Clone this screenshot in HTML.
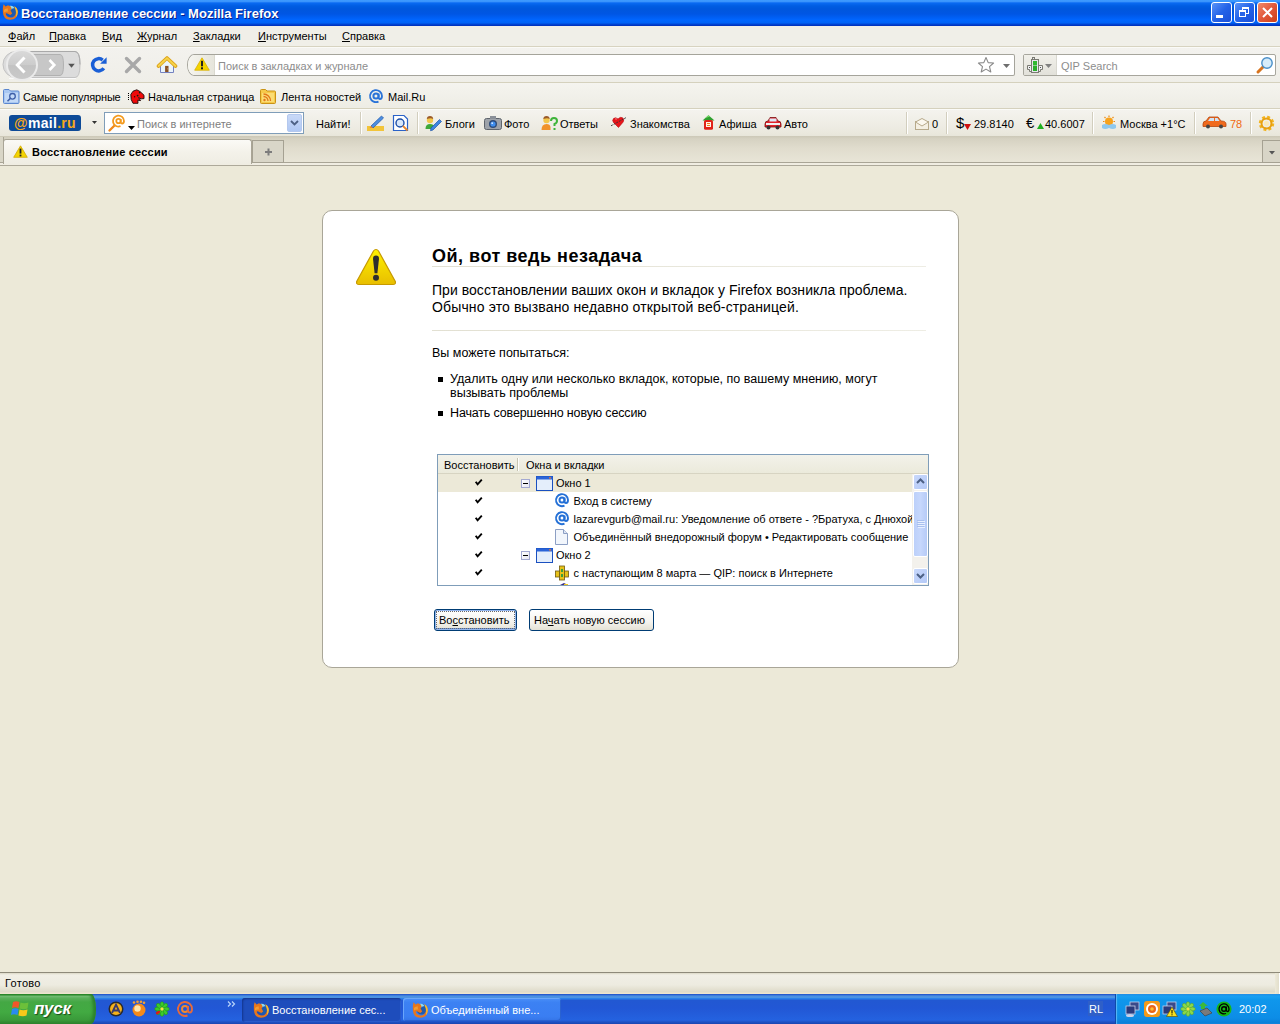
<!DOCTYPE html>
<html><head><meta charset="utf-8">
<style>
*{margin:0;padding:0;box-sizing:border-box}
html,body{width:1280px;height:1024px;overflow:hidden;background:#ECE9D8;font-family:"Liberation Sans",sans-serif;font-size:11px;color:#000}
.a{position:absolute}
.t{position:absolute;white-space:nowrap;line-height:13px}
svg{position:absolute;overflow:visible}
</style></head><body>

<!-- TITLE BAR -->
<div class="a" style="left:0;top:0;width:1280px;height:26px;background:linear-gradient(#3E9BFF 0px,#3A94FC 1.5px,#0A6AF2 3px,#005DE2 6px,#0057DD 9px,#0056E4 14px,#0060F6 18px,#0066FF 20px,#0063F5 23px,#0048D8 24px,#0034C0 25.5px,#0034C0 26px)"></div>
<svg style="left:2px;top:4px" width="16" height="16" viewBox="0 0 16 16"><circle cx="9.6" cy="7.2" r="5.2" fill="#1F5BAE"/><path d="M7.5 1.8 Q11.5 1 12.5 4.5 Q11 3.5 9.5 5.5 Q9 3.5 7.5 1.8Z" fill="#8EDDF4"/><path d="M0.9 8 Q0.6 3 1.6 0.3 L3.6 2.4 L6 1.2 L8.6 2.6 L9.6 4.6 L8.6 6.6 L10.2 9.6 L8.3 11 L5.3 9.4 Q3.6 8.6 3.8 10.3 Q5.2 13.6 9 13.6 Q13 13.2 13.8 9.2 Q14.4 5.2 12.3 2.2 Q15.6 3.8 15.8 8.2 Q15.4 15.6 8 15.8 Q1.2 15.5 0.9 8Z" fill="#E7761C"/><path d="M12.3 2.2 Q15.6 3.8 15.8 8.2 Q15.7 11.2 14 13.2 Q14.8 9 13.6 6 Z" fill="#F6BE2E"/><path d="M2 6 Q3 4 6 4.5 Q5 6 6.5 7.5 Q4 7 2 8.5Z" fill="#F39B32"/></svg>
<div class="t" style="left:21px;top:6px;font-size:13px;font-weight:bold;color:#fff;text-shadow:1px 1px #0A1E8A;line-height:15px">Восстановление сессии - Mozilla Firefox</div>
<div class="a" style="left:1211px;top:2px;width:21px;height:21px;border:1px solid #fff;border-radius:3px;background:linear-gradient(135deg,#5A93F8,#2463E8 50%,#1A4FD8)"></div>
<div class="a" style="left:1216px;top:15px;width:7px;height:3px;background:#fff"></div>
<div class="a" style="left:1234px;top:2px;width:21px;height:21px;border:1px solid #fff;border-radius:3px;background:linear-gradient(135deg,#5A93F8,#2463E8 50%,#1A4FD8)"></div>
<div class="a" style="left:1242px;top:7px;width:7px;height:7px;border:1px solid #fff;border-top-width:2px;"></div>
<div class="a" style="left:1239px;top:10px;width:7px;height:7px;border:1px solid #fff;border-top-width:2px;background:#2A66E8"></div>
<div class="a" style="left:1257px;top:2px;width:21px;height:21px;border:1px solid #fff;border-radius:3px;background:linear-gradient(135deg,#EE8A6A,#E2583A 50%,#CC4018)"></div>
<svg style="left:1257px;top:2px" width="21" height="21"><path d="M6 6 L15 15 M15 6 L6 15" stroke="#fff" stroke-width="2"/></svg>

<!-- MENU BAR -->
<div class="a" style="left:0;top:26px;width:1280px;height:20px;background:#F0EFE8"></div>
<div class="a" style="left:0;top:46px;width:1280px;height:1px;background:#D7D3C0"></div><div class="a" style="left:0;top:47px;width:1280px;height:1px;background:#FAFAF7"></div>
<div class="t" style="left:8px;top:30px"><u>Ф</u>айл</div>
<div class="t" style="left:49px;top:30px"><u>П</u>равка</div>
<div class="t" style="left:102px;top:30px"><u>В</u>ид</div>
<div class="t" style="left:137px;top:30px"><u>Ж</u>урнал</div>
<div class="t" style="left:193px;top:30px"><u>З</u>акладки</div>
<div class="t" style="left:258px;top:30px"><u>И</u>нструменты</div>
<div class="t" style="left:342px;top:30px"><u>С</u>правка</div>

<!-- NAV TOOLBAR -->
<div class="a" style="left:0;top:48px;width:1280px;height:35px;background:linear-gradient(#F3F2EE,#EFEEE8)"></div>
<div class="a" style="left:0;top:82px;width:1280px;height:1px;background:#D5D1BD"></div>

<!-- nav contents -->
<svg style="left:0px;top:48px" width="84" height="34" viewBox="0 0 84 34">
<defs><linearGradient id="bk" x1="0" y1="0" x2="0" y2="1"><stop offset="0" stop-color="#D9D9D9"/><stop offset="0.5" stop-color="#CCCCCC"/><stop offset="0.52" stop-color="#C3C3C3"/><stop offset="1" stop-color="#C9C9C9"/></linearGradient>
<linearGradient id="pl" x1="0" y1="0" x2="0" y2="1"><stop offset="0" stop-color="#DADADA"/><stop offset="1" stop-color="#D9D9D8"/></linearGradient></defs>
<path d="M16 3.5 H75 Q80 3.5 80 16.5 Q80 29.5 75 29.5 H16 A13 13 0 0 1 16 3.5 Z" fill="#DCDCDC" stroke="#C2C2C2" stroke-width="1"/><path d="M16 3.5 H75 Q80 3.5 80 16.5" fill="none" stroke="#A9A9A9" stroke-width="1"/>
<path d="M9 30.5 H76" stroke="#FAFAFA" stroke-width="1"/>
<path d="M30 6.5 H60 Q63.5 6.5 63.5 17 Q63.5 27.5 60 27.5 H30 Z" fill="#C7C7C7" stroke="#B1B1B1" stroke-width="1"/>
<path d="M68.2 15.8 H74.8 L71.5 19.8 Z" fill="#555"/>
<circle cx="22" cy="17" r="16" fill="#EBEBEB"/>
<circle cx="22" cy="17" r="14" fill="url(#bk)"/>
<path d="M24.5 9.5 L17.3 17 L24.5 24.5" stroke="#fff" stroke-width="3" fill="none"/>
<path d="M49.5 12 L54.3 17 L49.5 22" stroke="#fff" stroke-width="2.6" fill="none"/>
</svg>
<svg style="left:90px;top:56px" width="18" height="18" viewBox="0 0 18 18"><path d="M12.7 4.04 A6.15 6.15 0 1 0 13.79 12.28" stroke="#1A5FD6" stroke-width="3.5" fill="none"/><path d="M16.6 1.2 V7.7 H10.1 Z" fill="#1A5FD6"/></svg>
<svg style="left:124px;top:56px" width="18" height="18" viewBox="0 0 18 18"><path d="M2.5 2.5 L15.5 15.5 M15.5 2.5 L2.5 15.5" stroke="#A8A8A8" stroke-width="3.4" stroke-linecap="round"/></svg>
<svg style="left:157px;top:56px" width="20" height="18" viewBox="0 0 20 18"><path d="M3.5 7 V16.5 H16.5 V7 L10 2 Z" fill="#EAF4FB"/><path d="M3.5 8.5 V16.5 H16.5 V8.5" fill="none" stroke="#7482C0" stroke-width="1"/><rect x="8.1" y="9.9" width="3.4" height="6.1" fill="#8A5224"/><rect x="10.3" y="12.5" width="0.8" height="0.8" fill="#F0C080"/><path d="M1.4 10.1 L10 2 L18.6 10.1" stroke="#DDA41C" stroke-width="3.6" fill="none" stroke-linejoin="round" stroke-linecap="round"/><path d="M1.6 10 L10 2.2 L18.4 10" stroke="#F7D44A" stroke-width="1.8" fill="none" stroke-linejoin="round" stroke-linecap="round"/></svg>
<div class="a" style="left:187px;top:54px;width:828px;height:22px;border:1px solid #A5A49B;border-radius:7px 2px 2px 7px/11px 2px 2px 11px;background:#fff"></div>
<div class="a" style="left:188px;top:55px;width:27px;height:20px;border-radius:6px 0 0 6px/10px 0 0 10px;background:linear-gradient(90deg,#F6F5EF,#E6E5DC);border-right:1px solid #DAD9CF"></div>
<svg style="left:194px;top:57px" width="16" height="14" viewBox="0 0 16 14"><path d="M8 0.8 L15.3 13.2 H0.7 Z" fill="#F4D400" stroke="#D9B000" stroke-width="0.8" stroke-linejoin="round"/><rect x="7" y="3.8" width="2" height="5.5" fill="#222"/><rect x="7" y="10.3" width="2" height="2" fill="#222"/></svg>
<div class="t" style="left:218px;top:60px;color:#8D8D8D">Поиск в закладках и журнале</div>
<svg style="left:977px;top:56px" width="18" height="18" viewBox="0 0 18 18"><path d="M9 1.5 L11.2 6.6 L16.6 7 L12.5 10.6 L13.8 16 L9 13.1 L4.2 16 L5.5 10.6 L1.4 7 L6.8 6.6 Z" fill="#fff" stroke="#8A8A8A" stroke-width="1.1" stroke-linejoin="round"/></svg>
<svg style="left:1003px;top:64px" width="7" height="4"><path d="M0 0 H7 L3.5 4 Z" fill="#6E6E6E"/></svg>
<div class="a" style="left:1023px;top:54px;width:253px;height:22px;border:1px solid #A7A69D;border-radius:2px;background:#fff"></div>
<div class="a" style="left:1024px;top:55px;width:33px;height:20px;background:linear-gradient(#F1F0EA,#E2E1DA);border-right:1px solid #D9D8D0"></div>
<svg style="left:1027px;top:57px" width="16" height="16" viewBox="0 0 16 16"><path d="M4.5 8.5 H0.5 V12.5 H2.5 V14.5 H4.5 Z" fill="#F0F0F2" stroke="#7A7A72"/><path d="M11.5 8.5 H15.5 V12.5 H13.5 V14.5 H11.5 Z" fill="#F0F0F2" stroke="#7A7A72"/><rect x="4.5" y="2.5" width="7" height="13" fill="#E6E6EE" stroke="#7A7A72"/><rect x="5.5" y="0.5" width="2" height="2" fill="#E6E6EE" stroke="#7A7A72"/><rect x="5" y="3.5" width="6" height="1" fill="#E6E6EE"/><rect x="6" y="4" width="4" height="4.5" fill="#30B830"/><rect x="6" y="9" width="4" height="5" fill="#2AAE2A"/><rect x="2" y="10" width="1" height="1" fill="#555"/><rect x="13" y="10" width="1" height="1" fill="#555"/></svg>
<svg style="left:1045px;top:64px" width="7" height="4"><path d="M0 0 H7 L3.5 4 Z" fill="#808080"/></svg>
<div class="t" style="left:1061px;top:60px;color:#8D8D8D">QIP Search</div>
<svg style="left:1256px;top:56px" width="18" height="18" viewBox="0 0 18 18"><path d="M7 11 L2 16" stroke="#D8741E" stroke-width="3" stroke-linecap="round"/><circle cx="11" cy="7" r="5.2" fill="#D7ECFA" stroke="#4A8FC8" stroke-width="1.4"/></svg>

<!-- BOOKMARKS -->
<div class="a" style="left:0;top:83px;width:1280px;height:26px;background:linear-gradient(#F5F4EF,#EDECE4)"></div>
<div class="a" style="left:0;top:108px;width:1280px;height:1px;background:#D5D1BD"></div><div class="a" style="left:0;top:109px;width:1280px;height:1px;background:#FBFBF8"></div>

<!-- bm contents -->
<svg style="left:3px;top:89px" width="17" height="15" viewBox="0 0 17 15"><path d="M0.5 1.5 Q0.5 0.5 1.5 0.5 H6 L7.5 2 H15 Q16 2 16 3 V13.5 Q16 14.5 15 14.5 H1.5 Q0.5 14.5 0.5 13.5 Z" fill="#A9C8F2" stroke="#5A86CF" stroke-width="1"/><rect x="2" y="4" width="13" height="9" fill="#C2D9F7"/><circle cx="9.5" cy="7.3" r="2.8" fill="none" stroke="#3E5FA8" stroke-width="1.3"/><path d="M7.5 9.3 L4.5 12.3" stroke="#3E5FA8" stroke-width="1.6"/></svg>
<div class="t" style="left:23px;top:91px;letter-spacing:-0.2px">Самые популярные</div>
<svg style="left:128px;top:89px" width="17" height="15" viewBox="0 0 17 15"><path d="M5 14.3 L3.2 10.5 L2.8 5.5 L5 2.2 L8.8 0.8 L12 2.5 L16 6.2 L16 9.6 L13.2 9.8 L10.6 8.6 L12.6 11.6 L9.8 11.2 L10 14.3 Z" fill="#F00A0A" stroke="#1A0A0A" stroke-width="0.9" stroke-linejoin="round"/><circle cx="11.6" cy="3.6" r="0.8" fill="#102010"/><circle cx="9.6" cy="6.6" r="0.9" fill="#102010"/><circle cx="6.6" cy="7.8" r="0.7" fill="#2A0A0A"/><g fill="#000"><rect x="0" y="4" width="1" height="1"/><rect x="0" y="6" width="1" height="1"/><rect x="0" y="8" width="1" height="1"/><rect x="0" y="10" width="1" height="1"/></g></svg>
<div class="t" style="left:148px;top:91px">Начальная страница</div>
<svg style="left:260px;top:89px" width="16" height="15" viewBox="0 0 16 15"><path d="M0.5 1.5 Q0.5 0.5 1.5 0.5 H5.5 L7 2 H14.5 Q15.5 2 15.5 3 V13.5 Q15.5 14.5 14.5 14.5 H1.5 Q0.5 14.5 0.5 13.5 Z" fill="#F6C94A" stroke="#C99316" stroke-width="1"/><rect x="2" y="4" width="12" height="9" fill="#FBDD74"/><circle cx="4.5" cy="11" r="1.2" fill="#E2761A"/><path d="M3.5 7.5 A4.5 4.5 0 0 1 8 12 M3.5 5 A7 7 0 0 1 10.5 12" stroke="#E2761A" stroke-width="1.3" fill="none"/></svg>
<div class="t" style="left:281px;top:91px">Лента новостей</div>
<svg style="left:369px;top:89px" width="14" height="14" viewBox="0 0 14 14"><circle cx="7" cy="7" r="2.6" fill="none" stroke="#2A73D8" stroke-width="2"/><path d="M9.6 4.5 V8.2 Q9.6 10 11 10 Q13 10 13 7 A6 6 0 1 0 9.5 12.6" fill="none" stroke="#2A73D8" stroke-width="1.8"/></svg>
<div class="t" style="left:388px;top:91px">Mail.Ru</div>

<!-- MAILRU TOOLBAR -->
<div class="a" style="left:0;top:110px;width:1280px;height:26px;background:linear-gradient(#F4F3EE,#EDEBE2 70%,#E8E6DA)"></div>

<!-- mailru contents -->
<div class="a" style="left:9px;top:115px;width:72px;height:16px;border-radius:3px;background:#0D4A97"></div>
<div class="t" style="left:14px;top:115px;font-size:14px;line-height:16px;font-weight:bold;color:#fff;letter-spacing:0.3px"><span style="color:#F7A81B">@</span>mail<span style="color:#F7A81B">.ru</span></div>
<svg style="left:92px;top:121px" width="5" height="3"><path d="M0 0 H5 L2.5 3 Z" fill="#333"/></svg>
<div class="a" style="left:104px;top:112px;width:200px;height:22px;border:1px solid #7F9DB9;background:#fff"></div>
<svg style="left:108px;top:114px" width="18" height="18" viewBox="0 0 18 18"><path d="M6 12 L1.5 16.5" stroke="#F08A1C" stroke-width="2.4" stroke-linecap="round"/><circle cx="10.5" cy="7" r="2.2" fill="none" stroke="#F39A1E" stroke-width="1.8"/><path d="M12.7 5 V8 Q12.7 9.5 14 9.5 Q16 9.5 16 7 A5.5 5.5 0 1 0 12.5 12.2" fill="none" stroke="#F39A1E" stroke-width="1.8"/></svg>
<svg style="left:128px;top:126px" width="7" height="4"><path d="M0 0 H7 L3.5 4 Z" fill="#000"/></svg>
<div class="t" style="left:137px;top:118px;color:#7E7E7E">Поиск в интернете</div>
<div class="a" style="left:287px;top:114px;width:15px;height:18px;border-radius:2px;background:linear-gradient(#C9D9F7,#B0C8F4);border:1px solid #B4C8EE"></div>
<svg style="left:290px;top:120px" width="9" height="6"><path d="M1 1 L4.5 4.5 L8 1" stroke="#4D6185" stroke-width="1.8" fill="none"/></svg>
<div class="t" style="left:316px;top:118px">Найти!</div>
<div class="a" style="left:360px;top:112px;width:1px;height:22px;background:#D2CEBE"></div>
<div class="a" style="left:361px;top:112px;width:1px;height:22px;background:#FFFFFF"></div>
<svg style="left:367px;top:115px" width="18" height="16" viewBox="0 0 18 16"><rect x="0" y="11" width="17" height="5" fill="#F2C43A"/><path d="M4 11 L14.5 1 L16.5 3 L6 13 Z" fill="#4C8EE0" stroke="#2A5FB0" stroke-width="0.8"/><path d="M4 11 L2.5 13 L6 13 Z" fill="#E8843A"/></svg>
<svg style="left:393px;top:115px" width="18" height="17" viewBox="0 0 18 17"><path d="M0.5 0.5 H11 L14.5 4 V15.5 H0.5 Z" fill="#fff" stroke="#2A62C8" stroke-width="1.2"/><circle cx="7" cy="8" r="4" fill="#D9E8FA" stroke="#1E4FA8" stroke-width="1.4"/><path d="M10 11 L14.5 15.5" stroke="#E8862A" stroke-width="1.8"/></svg>
<div class="a" style="left:417px;top:112px;width:1px;height:22px;background:#D2CEBE"></div>
<div class="a" style="left:418px;top:112px;width:1px;height:22px;background:#FFFFFF"></div>
<svg style="left:425px;top:115px" width="17" height="16" viewBox="0 0 17 16"><circle cx="5" cy="5" r="3.2" fill="#F2C64A"/><path d="M1.8 4 Q2 1 5 1 Q8 1 8.2 4 Q6 2.5 1.8 4Z" fill="#9A5A2A"/><path d="M0.5 14 Q0.5 9 5 9 Q9 9 9 12 V14 Z" fill="#3EA83A"/><path d="M6 13 L14.5 4.5 L16.5 6.5 L8 15 L5.5 15.7 Z" fill="#3D85E0" stroke="#1F55A8" stroke-width="0.7"/></svg>
<div class="t" style="left:445px;top:118px">Блоги</div>
<svg style="left:484px;top:115px" width="18" height="16" viewBox="0 0 18 16"><rect x="0.5" y="3.5" width="17" height="11" rx="2" fill="#9EA3AA" stroke="#5E646C"/><rect x="6" y="1" width="6" height="3" fill="#8A9098"/><circle cx="9" cy="9" r="4" fill="#2E4C7A"/><circle cx="9" cy="9" r="2.6" fill="#3E8EF0"/><circle cx="8.2" cy="8.2" r="0.9" fill="#CFE6FF"/></svg>
<div class="t" style="left:504px;top:118px">Фото</div>
<svg style="left:541px;top:115px" width="17" height="16" viewBox="0 0 17 16"><circle cx="5.5" cy="5" r="3.2" fill="#F2C64A"/><path d="M2.3 4 Q2.5 1 5.5 1 Q8.5 1 8.7 4 Q6.5 2.5 2.3 4Z" fill="#9A5A2A"/><path d="M0.5 15 Q0.5 9 5.5 9 Q9 9 9.5 12 V15 Z" fill="#F0922A"/><path d="M10 6 Q10 3 13 3 Q16 3 16 6 Q16 8 13.5 9 V11" stroke="#3EB43A" stroke-width="2" fill="none"/><rect x="12.5" y="13" width="2" height="2" fill="#3EB43A"/></svg>
<div class="t" style="left:560px;top:118px">Ответы</div>
<svg style="left:610px;top:116px" width="18" height="12" viewBox="0 0 18 12"><path d="M8.5 11.5 L3.5 6.5 Q1.8 4.5 3.5 2.6 Q5.6 0.8 8 3 Q10.2 0.4 12.6 1.8 Q14.8 3.6 13 6.2 Z" fill="#E8141A" stroke="#B00A10" stroke-width="0.6"/><path d="M5 3 Q6 2.4 7 3.2" stroke="#FF9A9A" stroke-width="0.8" fill="none"/><path d="M1 9.8 L16.8 1.2" stroke="#333" stroke-width="0.9" stroke-dasharray="2 1"/></svg>
<div class="t" style="left:630px;top:118px">Знакомства</div>
<svg style="left:702px;top:115px" width="13" height="15" viewBox="0 0 13 15"><path d="M0.5 5.5 L6.5 0.3 L12.5 5.5 Z" fill="#2EA02E"/><path d="M3 3.3 L6.5 0.3 L8 1.6 Z" fill="#7ADA6A"/><rect x="2" y="5" width="9" height="9.8" rx="1.5" fill="#E02218"/><rect x="4" y="7" width="5" height="5" fill="#FFF4E8"/><rect x="5" y="8" width="3" height="1" fill="#F07A1A"/><rect x="5" y="10" width="3" height="1" fill="#F07A1A"/></svg>
<div class="t" style="left:719px;top:118px">Афиша</div>
<svg style="left:764px;top:116px" width="18" height="14" viewBox="0 0 18 14"><path d="M1 8 Q1 5 4 5 L6 1.5 H12 L14 5 Q17 5 17 8 V11 H1 Z" fill="#E0232B" stroke="#7A1010" stroke-width="0.8"/><rect x="5.5" y="2.5" width="7" height="3" fill="#DDE8F5"/><rect x="2" y="7" width="14" height="2" fill="#F2F2F2"/><circle cx="4.5" cy="11.5" r="2" fill="#333"/><circle cx="13.5" cy="11.5" r="2" fill="#333"/></svg>
<div class="t" style="left:784px;top:118px">Авто</div>
<div class="a" style="left:906px;top:112px;width:1px;height:22px;background:#D2CEBE"></div>
<div class="a" style="left:907px;top:112px;width:1px;height:22px;background:#FFFFFF"></div>
<svg style="left:915px;top:118px" width="14" height="12" viewBox="0 0 14 12"><rect x="0.5" y="3.5" width="13" height="8" fill="#F4EFE2" stroke="#B7A98A"/><path d="M0.5 4 L7 0.5 L13.5 4 L7 8 Z" fill="#FBF7EE" stroke="#B7A98A"/></svg>
<div class="t" style="left:932px;top:118px">0</div>
<div class="a" style="left:946px;top:112px;width:1px;height:22px;background:#D2CEBE"></div>
<div class="a" style="left:947px;top:112px;width:1px;height:22px;background:#FFFFFF"></div>
<div class="t" style="left:956px;top:114px;font-size:15px;line-height:17px">$</div>
<svg style="left:964px;top:124px" width="7" height="6"><path d="M0 0 H7 L3.5 6 Z" fill="#D01010"/></svg>
<div class="t" style="left:974px;top:118px">29.8140</div>
<div class="t" style="left:1026px;top:114px;font-size:15px;line-height:17px">€</div>
<svg style="left:1037px;top:123px" width="7" height="6"><path d="M0 6 H7 L3.5 0 Z" fill="#20B020"/></svg>
<div class="t" style="left:1045px;top:118px">40.6007</div>
<div class="a" style="left:1092px;top:112px;width:1px;height:22px;background:#D2CEBE"></div>
<div class="a" style="left:1093px;top:112px;width:1px;height:22px;background:#FFFFFF"></div>
<svg style="left:1101px;top:115px" width="16" height="16" viewBox="0 0 16 16"><circle cx="8" cy="6.5" r="4" fill="#F7A21C"/><path d="M8 0.5 V2 M2 6.5 H3.5 M12.5 6.5 H14 M3.5 2 L4.5 3 M12.5 2 L11.5 3" stroke="#F08A10" stroke-width="1.2"/><path d="M1 10 Q4 8 8 10 Q12 8 15 10 V13 Q12 15 8 13 Q4 15 1 13 Z" fill="#8EC8EE"/></svg>
<div class="t" style="left:1120px;top:118px">Москва +1°C</div>
<div class="a" style="left:1194px;top:112px;width:1px;height:22px;background:#D2CEBE"></div>
<div class="a" style="left:1195px;top:112px;width:1px;height:22px;background:#FFFFFF"></div>
<svg style="left:1202px;top:116px" width="25" height="13" viewBox="0 0 25 13"><path d="M1 8 Q1 5 4 5 L7 1 H16 L19 5 Q24 5 24 8 V10.5 H1 Z" fill="#F06A1E" stroke="#B44810" stroke-width="0.8"/><path d="M8 2 H12 V5 H6 Z M13 2 H15.5 L17.5 5 H13 Z" fill="#CFE4F6"/><circle cx="6" cy="10.5" r="2" fill="#444"/><circle cx="19" cy="10.5" r="2" fill="#444"/></svg>
<div class="t" style="left:1230px;top:118px;color:#F06A10">78</div>
<div class="a" style="left:1250px;top:112px;width:1px;height:22px;background:#D2CEBE"></div>
<div class="a" style="left:1251px;top:112px;width:1px;height:22px;background:#FFFFFF"></div>
<svg style="left:1258px;top:115px" width="17" height="17" viewBox="0 0 17 17"><circle cx="8.5" cy="8.5" r="6" fill="none" stroke="#F2B31E" stroke-width="3.4" stroke-dasharray="2.6 2.1"/><circle cx="8.5" cy="8.5" r="5" fill="none" stroke="#E8A010" stroke-width="2"/><circle cx="8.5" cy="8.5" r="2.5" fill="#FBE9B4"/></svg>
<!-- TAB BAR -->
<div class="a" style="left:0;top:136px;width:1280px;height:26px;background:linear-gradient(#CCC8B7,#D6D2C2 3px,#E0DCCD 12px,#E8E5D7)"></div>
<div class="a" style="left:0;top:162px;width:1280px;height:1px;background:#A9A596"></div>
<div class="a" style="left:0;top:163px;width:1280px;height:2px;background:#F0EDE2"></div>
<div class="a" style="left:0;top:165px;width:1280px;height:1px;background:#ADA99A"></div>
<!-- tab contents -->
<div class="a" style="left:0;top:137px;width:4px;height:26px;background:#D9D6C7;border-right:1px solid #A9A596;border-bottom:1px solid #A9A596"></div>
<div class="a" style="left:3px;top:139px;width:249px;height:25px;border:1px solid #A9A596;border-bottom:none;border-radius:3px 3px 0 0;background:linear-gradient(#FBFAF6,#F4F2EA 50%,#EFEDE3)"></div>
<svg style="left:13px;top:145px" width="15" height="13" viewBox="0 0 15 13"><path d="M7.5 0.8 L14.3 12.3 H0.7 Z" fill="#F4D400" stroke="#D2A800" stroke-width="0.8" stroke-linejoin="round"/><rect x="6.6" y="3.6" width="1.8" height="5" fill="#222"/><rect x="6.6" y="9.6" width="1.8" height="1.8" fill="#222"/></svg>
<div class="t" style="left:32px;top:146px;font-weight:bold;letter-spacing:0.2px">Восстановление сессии</div>
<div class="a" style="left:252px;top:140px;width:32px;height:23px;border:1px solid #A5A192;background:#D9D6C8"></div>
<svg style="left:264px;top:147px" width="10" height="10"><path d="M4.5 1.5 V8.5 M1 5 H8" stroke="#7C7C7C" stroke-width="2"/></svg>
<div class="a" style="left:1262px;top:140px;width:18px;height:23px;border:1px solid #A5A192;border-right:none;background:#D8D5C7"></div>
<svg style="left:1269px;top:151px" width="6" height="4"><path d="M0 0 H6 L3 3.5 Z" fill="#555"/></svg>


<!-- CONTENT -->
<div class="a" style="left:322px;top:210px;width:637px;height:458px;border:1px solid #A9A698;border-radius:10px;background:#fff"></div>
<svg style="left:355px;top:248px" width="42" height="38" viewBox="0 0 42 38"><defs><linearGradient id="wg" x1="0" y1="0" x2="0" y2="1"><stop offset="0" stop-color="#FFF200"/><stop offset="1" stop-color="#E8BE00"/></linearGradient></defs><path d="M21 1.5 Q22.5 1.5 23.5 3 L40.3 33.5 Q41 36.5 38 36.5 H4 Q1 36.5 1.7 33.5 L18.5 3 Q19.5 1.5 21 1.5 Z" fill="url(#wg)" stroke="#C79A00" stroke-width="1.2"/><path d="M18 10.8 Q18 7.6 21 7.6 Q24 7.6 24 10.8 L22.4 25.2 H19.6 Z" fill="#2E2E2E"/><circle cx="21" cy="29.8" r="3" fill="#2E2E2E"/></svg>
<div class="t" style="left:432px;top:246px;font-size:18px;line-height:20px;font-weight:bold;letter-spacing:0.5px">Ой, вот ведь незадача</div>
<div class="a" style="left:432px;top:266px;width:494px;height:1px;background:linear-gradient(90deg,#E2E0D2,#EEEDE4)"></div>
<div class="t" style="left:432px;top:282px;font-size:14px;line-height:16.5px;letter-spacing:0.04px">При восстановлении ваших окон и вкладок у Firefox возникла проблема.</div>
<div class="t" style="left:432px;top:298.5px;font-size:14px;line-height:16.5px;letter-spacing:0.14px">Обычно это вызвано недавно открытой веб-страницей.</div>
<div class="a" style="left:432px;top:330px;width:494px;height:1px;background:linear-gradient(90deg,#E2E0D2,#EEEDE4)"></div>
<div class="t" style="left:432px;top:346px;font-size:12.5px;line-height:15px">Вы можете попытаться:</div>
<div class="a" style="left:438px;top:377px;width:5px;height:5px;background:#000"></div>
<div class="t" style="left:450px;top:372px;font-size:12.5px;line-height:14px">Удалить одну или несколько вкладок, которые, по вашему мнению, могут<br>вызывать проблемы</div>
<div class="a" style="left:438px;top:411px;width:5px;height:5px;background:#000"></div>
<div class="t" style="left:450px;top:406px;font-size:12.5px;line-height:14px;letter-spacing:-0.15px">Начать совершенно новую сессию</div>

<!-- TREE -->
<div class="a" style="left:437px;top:454px;width:492px;height:132px;border:1px solid #7F9DB9;background:#fff;overflow:hidden">
 <div class="a" style="left:0;top:0;width:490px;height:19px;background:linear-gradient(#F3F2EA,#EBEADB);border-bottom:1px solid #D7D4C2"></div>
 <div class="a" style="left:79px;top:3px;width:1px;height:13px;background:#C7C5B2"></div>
 <div class="a" style="left:80px;top:3px;width:1px;height:13px;background:#fff"></div>
 <div class="t" style="left:6px;top:4px">Восстановить</div>
 <div class="t" style="left:88px;top:4px">Окна и вкладки</div>
 <div class="a" style="left:0;top:19px;width:474px;height:18px;background:#ECE9D8"></div>
 <svg style="left:37px;top:24px" width="8" height="7"><path d="M0.7 2.7 L2.6 5.3 L6.8 0.7" stroke="#000" stroke-width="1.9" fill="none"/></svg>
<div class="a" style="left:83px;top:24px;width:9px;height:9px;border:1px solid #A3A9D2;background:linear-gradient(135deg,#fff,#E6E6F0)"></div><div class="a" style="left:85px;top:28px;width:5px;height:1px;background:#000"></div>
<svg style="left:98px;top:21px" width="17" height="15" viewBox="0 0 17 15"><rect x="0.5" y="0.5" width="16" height="14" fill="#E4EEFB" stroke="#1A50C0"/><rect x="0.5" y="0.5" width="16" height="3" fill="#2B64D8"/><rect x="13" y="1.3" width="2" height="1.2" fill="#F07A30"/></svg>
<div class="t" style="left:118px;top:22px">Окно 1</div>
<svg style="left:37px;top:42px" width="8" height="7"><path d="M0.7 2.7 L2.6 5.3 L6.8 0.7" stroke="#000" stroke-width="1.9" fill="none"/></svg>
<svg style="left:117px;top:38px" width="14" height="14" viewBox="0 0 14 14"><circle cx="7" cy="7" r="2.5" fill="none" stroke="#2470D6" stroke-width="2"/><path d="M9.5 4.5 V8.2 Q9.5 10 11 10 Q13 10 13 7 A6 6 0 1 0 9.5 12.6" fill="none" stroke="#2470D6" stroke-width="1.9"/></svg>
<div class="t" style="left:135.5px;top:40px">Вход в систему</div>
<svg style="left:37px;top:60px" width="8" height="7"><path d="M0.7 2.7 L2.6 5.3 L6.8 0.7" stroke="#000" stroke-width="1.9" fill="none"/></svg>
<svg style="left:117px;top:56px" width="14" height="14" viewBox="0 0 14 14"><circle cx="7" cy="7" r="2.5" fill="none" stroke="#2470D6" stroke-width="2"/><path d="M9.5 4.5 V8.2 Q9.5 10 11 10 Q13 10 13 7 A6 6 0 1 0 9.5 12.6" fill="none" stroke="#2470D6" stroke-width="1.9"/></svg>
<div class="t" style="left:135.5px;top:58px">lazarevgurb@mail.ru: Уведомление об ответе - ?Братуха, с Днюхой</div>
<svg style="left:37px;top:78px" width="8" height="7"><path d="M0.7 2.7 L2.6 5.3 L6.8 0.7" stroke="#000" stroke-width="1.9" fill="none"/></svg>
<svg style="left:117px;top:74px" width="13" height="16" viewBox="0 0 13 16"><path d="M0.5 0.5 H8.5 L12.5 4.5 V15.5 H0.5 Z" fill="#F2F6FC" stroke="#8C9FC4"/><path d="M8.5 0.5 V4.5 H12.5" fill="#DDE6F4" stroke="#8C9FC4"/></svg>
<div class="t" style="left:135.5px;top:76px">Объединённый внедорожный форум • Редактировать сообщение</div>
<svg style="left:37px;top:96px" width="8" height="7"><path d="M0.7 2.7 L2.6 5.3 L6.8 0.7" stroke="#000" stroke-width="1.9" fill="none"/></svg>
<div class="a" style="left:83px;top:96px;width:9px;height:9px;border:1px solid #A3A9D2;background:linear-gradient(135deg,#fff,#E6E6F0)"></div><div class="a" style="left:85px;top:100px;width:5px;height:1px;background:#000"></div>
<svg style="left:98px;top:93px" width="17" height="15" viewBox="0 0 17 15"><rect x="0.5" y="0.5" width="16" height="14" fill="#E4EEFB" stroke="#1A50C0"/><rect x="0.5" y="0.5" width="16" height="3" fill="#2B64D8"/><rect x="13" y="1.3" width="2" height="1.2" fill="#F07A30"/></svg>
<div class="t" style="left:118px;top:94px">Окно 2</div>
<svg style="left:37px;top:114px" width="8" height="7"><path d="M0.7 2.7 L2.6 5.3 L6.8 0.7" stroke="#000" stroke-width="1.9" fill="none"/></svg>
<svg style="left:117px;top:110px" width="14" height="16" viewBox="0 0 14 16"><rect x="4.5" y="1" width="5" height="14" fill="#E8C21A" stroke="#6E5A10" stroke-width="0.8"/><rect x="0.5" y="6" width="4" height="6" fill="#E8C21A" stroke="#6E5A10" stroke-width="0.8"/><rect x="9.5" y="6" width="4" height="6" fill="#E8C21A" stroke="#6E5A10" stroke-width="0.8"/><rect x="6" y="4" width="2" height="3" fill="#3CA03C"/><rect x="6" y="9" width="2" height="3" fill="#3CA03C"/></svg>
<div class="t" style="left:135.5px;top:112px">с наступающим 8 марта — QIP: поиск в Интернете</div>
<svg style="left:37px;top:132px" width="8" height="7"><path d="M0.7 2.7 L2.6 5.3 L6.8 0.7" stroke="#000" stroke-width="1.9" fill="none"/></svg>
<svg style="left:117px;top:127px" width="14" height="16" viewBox="0 0 14 16"><path d="M1 5 L9 1 L13 3 V16 H1 Z" fill="#3A2E8A"/><rect x="9" y="2" width="4" height="3" fill="#F3C81A"/></svg>

 <div class="a" style="left:474px;top:19px;width:16px;height:111px;background:#F3F1EC"></div>
 <div class="a" style="left:475px;top:19px;width:15px;height:16px;border:1px solid #fff;border-radius:2px;background:linear-gradient(135deg,#C8D8FB,#B4C9F7)"></div>
 <svg style="left:478px;top:23px" width="9" height="6"><path d="M1 5 L4.5 1.5 L8 5" stroke="#4D6185" stroke-width="2" fill="none"/></svg>
 <div class="a" style="left:475px;top:36px;width:15px;height:66px;border:1px solid #fff;border-radius:2px;background:linear-gradient(90deg,#BCD0FA,#C6D7FC 50%,#B6CBF7)"></div>
 <svg style="left:478px;top:64px" width="9" height="9"><path d="M1 1.5 H8 M1 3.5 H8 M1 5.5 H8 M1 7.5 H8" stroke="#A9C0EE" stroke-width="1"/><path d="M2 2.5 H9 M2 4.5 H9 M2 6.5 H9 M2 8.5 H9" stroke="#E8F0FF" stroke-width="1"/></svg>
 <div class="a" style="left:475px;top:113px;width:15px;height:16px;border:1px solid #fff;border-radius:2px;background:linear-gradient(135deg,#C8D8FB,#B4C9F7)"></div>
 <svg style="left:478px;top:118px" width="9" height="6"><path d="M1 1 L4.5 4.5 L8 1" stroke="#4D6185" stroke-width="2" fill="none"/></svg>
</div>

<!-- BUTTONS -->
<div class="a" style="left:434px;top:609px;width:83px;height:22px;border:1px solid #003C74;border-radius:3px;background:linear-gradient(#FFFFFF,#F4F3EE 60%,#E4E1D4);box-shadow:inset 0 0 0 1px #94B6EE,inset 0 -1px 0 1px #6A93DC"></div>
<div class="a" style="left:436px;top:611px;width:79px;height:18px;border:1px dotted #6A6A6A"></div>
<div class="t" style="left:439px;top:614px">Во<u>с</u>становить</div>
<div class="a" style="left:529px;top:609px;width:125px;height:22px;border:1px solid #003C74;border-radius:3px;background:linear-gradient(#FFFFFF,#F4F3EE 60%,#E4E1D4)"></div>
<div class="t" style="left:534px;top:614px">На<u>ч</u>ать новую сессию</div>

<!-- STATUS BAR -->
<div class="a" style="left:0;top:972px;width:1280px;height:1px;background:#8E8A7A"></div>
<div class="a" style="left:0;top:973px;width:1280px;height:21px;background:linear-gradient(#DCD8C6,#F1EFE6 2px,#EDEBE0 12px,#DEDAC8 19px,#ECE4CE 20px,#ECE4CE 21px)"></div>
<div class="t" style="left:5px;top:977px;letter-spacing:0.3px">Готово</div>
<div class="a" style="left:1275px;top:973px;width:4px;height:21px;background:linear-gradient(90deg,#ECE9D8,#E2DECB)"></div><div class="a" style="left:1279px;top:973px;width:1px;height:21px;background:#fff"></div>

<!-- TASKBAR -->
<div class="a" style="left:0;top:994px;width:1280px;height:30px;background:linear-gradient(#1E4EC0 0px,#2F68D8 1px,#4A90E0 2px,#4C92E2 3.5px,#2A80EA 4.5px,#2258D2 6.5px,#2257D5 14px,#2462E0 26px,#1F52C4 28px,#1A45B0 30px)"></div>
<div class="a" style="left:0;top:994px;width:96px;height:30px;border-radius:0 5px 5px 0/0 15px 15px 0;background:linear-gradient(#2A8A2A 0px,#2A8A2A 1px,#78C078 2px,#5BB05B 4px,#44A844 8px,#42AA42 18px,#3A9A3A 26px,#2E822E 30px);box-shadow:inset -3px 0 3px #2C822C"></div>
<svg style="left:10px;top:1000px" width="20" height="18" viewBox="0 0 20 18"><path d="M3 2 Q6 0.5 9.5 2 L8.5 8 Q5 6.5 2 8 Z" fill="#F0562A"/><path d="M10.5 2.5 Q14 4 18.5 2.5 L17.5 8.5 Q14 10 9.5 8.5 Z" fill="#6CC03A"/><path d="M2 9 Q5 7.5 8.5 9 L7.5 15 Q4 13.5 1 15 Z" fill="#2A8AF0"/><path d="M9.5 9.5 Q13 11 17.5 9.5 L16.5 15.5 Q13 17 8.5 15.5 Z" fill="#F8C81A"/></svg>
<div class="t" style="left:34px;top:998px;font-size:17px;line-height:22px;font-weight:bold;font-style:italic;color:#fff;letter-spacing:-0.3px;text-shadow:1px 1px 1px #1A4A1A">пуск</div>
<svg style="left:108px;top:1001px" width="16" height="16" viewBox="0 0 16 16"><circle cx="8" cy="8" r="7.5" fill="#2A2A2A"/><circle cx="8" cy="8" r="6" fill="#F6B21A"/><path d="M4 12 L8 3.5 L12 12 M5.5 9.5 H10.5" stroke="#3A3A6A" stroke-width="1.8" fill="none"/></svg>
<svg style="left:131px;top:1000px" width="16" height="17" viewBox="0 0 16 17"><circle cx="8" cy="10" r="6.5" fill="#F58A1A"/><circle cx="6.5" cy="8.5" r="3.2" fill="#FDE6B0"/><circle cx="3" cy="2.5" r="1.3" fill="#F8A030"/><circle cx="6.5" cy="1.8" r="1.3" fill="#F8A030"/><circle cx="10" cy="1.8" r="1.3" fill="#F8A030"/><circle cx="13" cy="2.8" r="1.3" fill="#F8A030"/></svg>
<svg style="left:154px;top:1001px" width="16" height="16" viewBox="0 0 16 16"><g fill="#3CCB2A" stroke="#1E8A14" stroke-width="0.5"><ellipse cx="8" cy="3.6" rx="1.9" ry="2.9" transform="rotate(0 8 8)"/><ellipse cx="8" cy="3.6" rx="1.9" ry="2.9" transform="rotate(45 8 8)"/><ellipse cx="8" cy="3.6" rx="1.9" ry="2.9" transform="rotate(90 8 8)"/><ellipse cx="8" cy="3.6" rx="1.9" ry="2.9" transform="rotate(135 8 8)"/><ellipse cx="8" cy="3.6" rx="1.9" ry="2.9" transform="rotate(180 8 8)"/><ellipse cx="8" cy="3.6" rx="1.9" ry="2.9" transform="rotate(225 8 8)"/><ellipse cx="8" cy="3.6" rx="1.9" ry="2.9" transform="rotate(270 8 8)"/><ellipse cx="8" cy="3.6" rx="1.9" ry="2.9" transform="rotate(315 8 8)"/></g><ellipse cx="4" cy="11.5" rx="2.4" ry="1.3" transform="rotate(-30 4 11.5)" fill="#E01818"/><circle cx="8" cy="8" r="1.7" fill="#F6E83A"/></svg>
<svg style="left:177px;top:1001px" width="16" height="16" viewBox="0 0 16 16"><circle cx="8" cy="8" r="3" fill="none" stroke="#F08A30" stroke-width="2"/><path d="M11 5 V9.5 Q11 11.5 12.8 11.5 Q15 11.5 15 8 A7 7 0 1 0 10.5 14.5" fill="none" stroke="#E86A3A" stroke-width="1.9"/></svg>
<svg style="left:227px;top:1001px" width="9" height="6" viewBox="0 0 9 6"><path d="M1 0.5 L3.5 3 L1 5.5 M5 0.5 L7.5 3 L5 5.5" stroke="#B8D4FA" stroke-width="1.2" fill="none"/></svg>
<div class="a" style="left:242px;top:998px;width:159px;height:24px;border-radius:3px;background:#1E4DBC;box-shadow:inset 1px 1px 2px #13358E,inset -1px -1px 0 #2A5ED0"></div>
<svg style="left:253px;top:1002px" width="16" height="16" viewBox="0 0 16 16"><circle cx="9.6" cy="7.2" r="5.2" fill="#1F5BAE"/><path d="M7.5 1.8 Q11.5 1 12.5 4.5 Q11 3.5 9.5 5.5 Q9 3.5 7.5 1.8Z" fill="#8EDDF4"/><path d="M0.9 8 Q0.6 3 1.6 0.3 L3.6 2.4 L6 1.2 L8.6 2.6 L9.6 4.6 L8.6 6.6 L10.2 9.6 L8.3 11 L5.3 9.4 Q3.6 8.6 3.8 10.3 Q5.2 13.6 9 13.6 Q13 13.2 13.8 9.2 Q14.4 5.2 12.3 2.2 Q15.6 3.8 15.8 8.2 Q15.4 15.6 8 15.8 Q1.2 15.5 0.9 8Z" fill="#E7761C"/><path d="M12.3 2.2 Q15.6 3.8 15.8 8.2 Q15.7 11.2 14 13.2 Q14.8 9 13.6 6 Z" fill="#F6BE2E"/><path d="M2 6 Q3 4 6 4.5 Q5 6 6.5 7.5 Q4 7 2 8.5Z" fill="#F39B32"/></svg>
<div class="t" style="left:272px;top:1004px;color:#fff">Восстановление сес...</div>
<div class="a" style="left:403px;top:998px;width:158px;height:23px;border-radius:3px;background:linear-gradient(#4A90F8,#3C81F3 20%,#3A7EF2 80%,#3474E6);box-shadow:inset 1px 1px 0 #6AA6FA,inset -1px -1px 0 #2A62D0"></div>
<svg style="left:412px;top:1002px" width="16" height="16" viewBox="0 0 16 16"><circle cx="9.6" cy="7.2" r="5.2" fill="#1F5BAE"/><path d="M7.5 1.8 Q11.5 1 12.5 4.5 Q11 3.5 9.5 5.5 Q9 3.5 7.5 1.8Z" fill="#8EDDF4"/><path d="M0.9 8 Q0.6 3 1.6 0.3 L3.6 2.4 L6 1.2 L8.6 2.6 L9.6 4.6 L8.6 6.6 L10.2 9.6 L8.3 11 L5.3 9.4 Q3.6 8.6 3.8 10.3 Q5.2 13.6 9 13.6 Q13 13.2 13.8 9.2 Q14.4 5.2 12.3 2.2 Q15.6 3.8 15.8 8.2 Q15.4 15.6 8 15.8 Q1.2 15.5 0.9 8Z" fill="#E7761C"/><path d="M12.3 2.2 Q15.6 3.8 15.8 8.2 Q15.7 11.2 14 13.2 Q14.8 9 13.6 6 Z" fill="#F6BE2E"/><path d="M2 6 Q3 4 6 4.5 Q5 6 6.5 7.5 Q4 7 2 8.5Z" fill="#F39B32"/></svg>
<div class="t" style="left:431px;top:1004px;color:#fff">Объединённый вне...</div>
<div class="a" style="left:1088px;top:1001px;width:15px;height:15px;background:#2F5FC8"></div>
<div class="t" style="left:1089px;top:1003px;color:#fff">RL</div>
<div class="a" style="left:1115px;top:994px;width:165px;height:30px;background:linear-gradient(#1C86E0 0px,#1AA0F2 2px,#0F97EC 6px,#0D8DE6 24px,#0B7CD6 30px);border-left:1px solid #0E4AA8;box-shadow:inset 1px 0 1px #5CB8F8"></div>
<svg style="left:1125px;top:1001px" width="15" height="16" viewBox="0 0 15 16"><rect x="5" y="1" width="9" height="8" fill="#3A4A8A" stroke="#C8D0E8" stroke-width="0.8"/><rect x="1" y="5" width="9" height="8" fill="#2A3A7A" stroke="#C8D0E8" stroke-width="0.8"/><ellipse cx="5" cy="14.5" rx="4" ry="1.5" fill="#C8D0E8"/></svg>
<svg style="left:1144px;top:1001px" width="16" height="16" viewBox="0 0 16 16"><rect x="0" y="0" width="16" height="16" rx="3" fill="#F39A1A"/><circle cx="8" cy="8" r="6" fill="#fff"/><circle cx="8" cy="8" r="4" fill="#E8641A"/><circle cx="8" cy="8" r="1.8" fill="#F8C030"/></svg>
<svg style="left:1162px;top:1001px" width="16" height="16" viewBox="0 0 16 16"><rect x="5" y="1" width="9" height="8" fill="#3A4A8A" stroke="#C8D0E8" stroke-width="0.8"/><rect x="1" y="5" width="9" height="8" fill="#2A3A7A" stroke="#C8D0E8" stroke-width="0.8"/><path d="M10 6 L15.5 15.5 H4.5 Z" fill="#F8E020" stroke="#5A4A00" stroke-width="0.6"/><rect x="9.5" y="9" width="1" height="3.5" fill="#000"/><rect x="9.5" y="13.3" width="1" height="1" fill="#000"/></svg>
<svg style="left:1180px;top:1001px" width="16" height="16" viewBox="0 0 16 16"><g fill="#8AD84A" stroke="#4A9A2A" stroke-width="0.5"><ellipse cx="8" cy="3.6" rx="1.9" ry="2.9" transform="rotate(0 8 8)"/><ellipse cx="8" cy="3.6" rx="1.9" ry="2.9" transform="rotate(45 8 8)"/><ellipse cx="8" cy="3.6" rx="1.9" ry="2.9" transform="rotate(90 8 8)"/><ellipse cx="8" cy="3.6" rx="1.9" ry="2.9" transform="rotate(135 8 8)"/><ellipse cx="8" cy="3.6" rx="1.9" ry="2.9" transform="rotate(180 8 8)"/><ellipse cx="8" cy="3.6" rx="1.9" ry="2.9" transform="rotate(225 8 8)"/><ellipse cx="8" cy="3.6" rx="1.9" ry="2.9" transform="rotate(270 8 8)"/><ellipse cx="8" cy="3.6" rx="1.9" ry="2.9" transform="rotate(315 8 8)"/></g><circle cx="8" cy="8" r="1.7" fill="#F6E83A"/></svg>
<svg style="left:1199px;top:1001px" width="14" height="16" viewBox="0 0 14 16"><path d="M4 1 L9 5 L6 5 V8 H2 V5 H0 Z" fill="#3CB83A"/><path d="M1 10 L8 7 L13 12 L6 15 Z" fill="#7A7A7A" stroke="#3A3A3A" stroke-width="0.6"/></svg>
<svg style="left:1216px;top:1001px" width="16" height="16" viewBox="0 0 16 16"><circle cx="8" cy="8" r="7.6" fill="#16B816"/><circle cx="8" cy="8" r="2.3" fill="none" stroke="#000" stroke-width="1.4"/><path d="M10.3 5.5 V9 Q10.3 10.5 11.5 10.5 Q13 10.5 13 8 A5 5 0 1 0 10 12.5" fill="none" stroke="#000" stroke-width="1.3"/></svg>
<div class="t" style="left:1239px;top:1003px;color:#fff">20:02</div>
</body></html>
